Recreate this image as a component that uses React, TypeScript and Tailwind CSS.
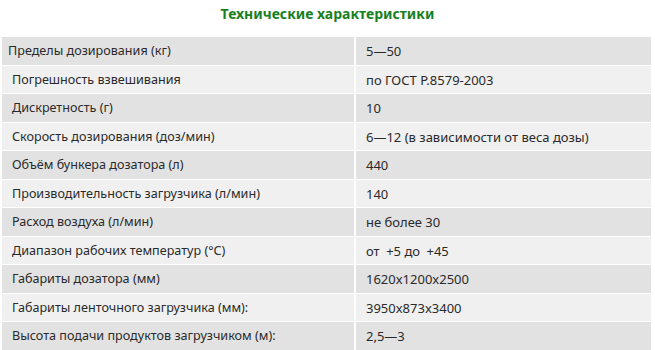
import React from "react";

const rows: [string, string][] = [
  ["Пределы дозирования (кг)", "5—50"],
  ["Погрешность взвешивания", "по ГОСТ Р.8579-2003"],
  ["Дискретность (г)", "10"],
  ["Скорость дозирования (доз/мин)", "6—12 (в зависимости от веса дозы)"],
  ["Объём бункера дозатора (л)", "440"],
  ["Производительность загрузчика (л/мин)", "140"],
  ["Расход воздуха (л/мин)", "не более 30"],
  ["Диапазон рабочих температур (°С)", "от\u2002+5 до\u2002+45"],
  ["Габариты дозатора (мм)", "1620x1200x2500"],
  ["Габариты ленточного загрузчика (мм):", "3950x873x3400"],
  ["Высота подачи продуктов загрузчиком (м):", "2,5—3"],
];

export default function App() {
  return (
    <div
      className="w-[655px] h-[350px] bg-white overflow-hidden text-[#2a2a2a]"
      style={{ fontFamily: '"Noto Sans", "DejaVu Sans", sans-serif' }}
    >
      <div className="h-[37px] pt-[3px] text-center text-[14px] font-bold text-[#17801f]">
        Технические характеристики
      </div>
      <div className="ml-[2px] w-[649px] flex flex-col">
        {rows.map(([k, v], i) => (
          <div
            key={i}
            className={`flex h-[28.5px] border-b border-white ${
              i % 2 === 0 ? "bg-[#e2e2e2]" : "bg-[#f0f0f0]"
            }`}
          >
            <div
              className={`w-[354px] flex items-center pt-[2px] text-[12.6px] border-r-2 border-white ${
                i === 0 ? "pl-[6px]" : "pl-[10px]"
              }`}
            >
              {k}
            </div>
            <div className="flex-1 flex items-center pt-[2px] pl-[10px] text-[13px] whitespace-pre">
              {v}
            </div>
          </div>
        ))}
      </div>
    </div>
  );
}
